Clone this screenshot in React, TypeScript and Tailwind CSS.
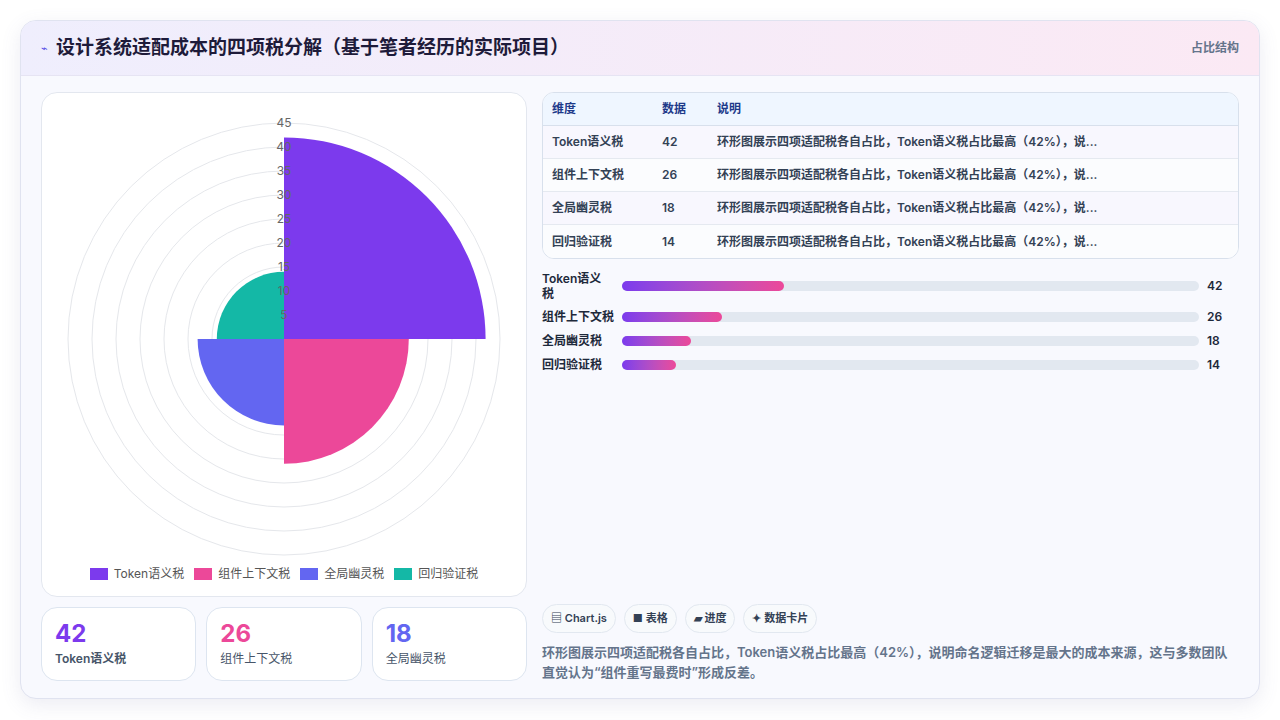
const DATA = [
  { label: "Token语义税", value: 42, color: "#7c3aed" },
  { label: "组件上下文税", value: 26, color: "#ec4899" },
  { label: "全局幽灵税", value: 18, color: "#6366f1" },
  { label: "回归验证税", value: 14, color: "#14b8a6" },
];

const DESC = "环形图展示四项适配税各自占比，Token语义税占比最高（42%），说...";

function PolarChart() {
  const cx = 242;
  const cy = 236;
  const k = 4.8;
  const arc = (r: number, a0: number, a1: number) => {
    const p = (a: number) => [cx + r * Math.cos((a * Math.PI) / 180), cy + r * Math.sin((a * Math.PI) / 180)];
    const [x0, y0] = p(a0);
    const [x1, y1] = p(a1);
    return `M${cx},${cy} L${x0},${y0} A${r},${r} 0 0 1 ${x1},${y1} Z`;
  };
  return (
    <svg width="484" height="460" viewBox="0 0 484 460">
      {Array.from({ length: 9 }, (_, i) => (
        <circle key={i} cx={cx} cy={cy} r={(i + 1) * 5 * k} fill="none" stroke="#e5e7eb" strokeWidth="1" />
      ))}
      {DATA.map((d, i) => (
        <path key={d.label} d={arc(d.value * k, -90 + i * 90, i * 90)} fill={d.color} />
      ))}
      {Array.from({ length: 9 }, (_, i) => (
        <text key={i} x={cx} y={cy - (i + 1) * 5 * k + 4} textAnchor="middle" fontSize="12" fill="#666" fontFamily="Inter, sans-serif">
          {(i + 1) * 5}
        </text>
      ))}
    </svg>
  );
}

export default function App() {
  return (
    <div className="w-[1280px] h-[720px] bg-white p-5" style={{ fontFamily: "Inter, 'Noto Sans CJK SC', sans-serif" }}>
      <div className="h-[679px] rounded-2xl border border-[#e0e3f0] bg-[#f8f9fe] shadow-[0_6px_20px_rgba(100,100,160,0.12)] overflow-hidden flex flex-col">
        {/* Header */}
        <div className="h-[55px] flex items-center justify-between px-5 border-b border-[#e6e4f3] bg-gradient-to-r from-[#efeefd] to-[#fbe9f4]">
          <div className="flex items-center gap-2">
            <span className="text-[11px] text-[#4f46e5]">⌁</span>
            <h1 className="text-[19px] font-bold text-[#1e1b3a]">设计系统适配成本的四项税分解（基于笔者经历的实际项目）</h1>
          </div>
          <span className="text-xs font-semibold text-[#64748b]">占比结构</span>
        </div>

        <div className="flex-1 flex gap-[15px] px-5 pt-4 pb-4">
          {/* Left */}
          <div className="w-[486px] flex flex-col gap-[10px]">
            <div className="h-[505px] rounded-2xl border border-[#e3e7ef] bg-white flex flex-col items-center pt-[10px]">
              <PolarChart />
              <div className="flex items-center gap-[10px] mt-[3px] text-xs text-[#555]">
                {DATA.map((d) => (
                  <div key={d.label} className="flex items-center gap-[6px]">
                    <span className="w-[18px] h-[12px]" style={{ background: d.color }} />
                    {d.label}
                  </div>
                ))}
              </div>
            </div>
            <div className="grid grid-cols-3 gap-[10px]">
              {DATA.slice(0, 3).map((d, i) => (
                <div key={d.label} className="h-[74px] rounded-2xl border border-[#dde5f0] bg-white px-[13px] pt-[12px]">
                  <div className="text-[24px] font-bold leading-7" style={{ color: ["#7c3aed", "#ec4899", "#6366f1"][i] }}>{d.value}</div>
                  <div className={`text-xs text-[#475569] mt-[3px] ${i === 0 ? "font-semibold" : ""}`}>{d.label}</div>
                </div>
              ))}
            </div>
          </div>

          {/* Right */}
          <div className="flex-1 flex flex-col">
            <div className="rounded-xl border border-[#d8e0ec] bg-white overflow-hidden text-xs">
              <div className="flex h-[33px] items-center bg-[#eff6ff] text-[#1e3a8a] font-semibold border-b border-[#d8e0ec]">
                <span className="w-[119px] pl-[9px]">维度</span>
                <span className="w-[55px]">数据</span>
                <span>说明</span>
              </div>
              {DATA.map((d, i) => (
                <div key={d.label} className={`flex h-[33px] items-center text-[#334155] font-semibold ${i % 2 === 0 ? "bg-[#f8f7fe]" : "bg-[#fbfcfe]"} ${i < 3 ? "border-b border-[#e5e9f0]" : ""}`}>
                  <span className="w-[119px] pl-[9px]">{d.label}</span>
                  <span className="w-[55px]">{d.value}</span>
                  <span>{DESC}</span>
                </div>
              ))}
            </div>

            <div className="flex flex-col gap-[8px] mt-[12px] text-xs font-semibold text-[#1e293b]">
              {DATA.map((d, i) => (
                <div key={d.label} className="flex items-center">
                  <span className={`w-[80px] ${i === 0 ? "leading-[15px]" : ""}`}>{i === 0 ? <>Token语义<br />税</> : d.label}</span>
                  <div className="w-[577px] h-[10px] rounded-full bg-[#e2e8f0]">
                    <div className="h-full rounded-full bg-gradient-to-r from-[#7c3aed] to-[#ec4899]" style={{ width: `${(d.value / 150) * 100}%` }} />
                  </div>
                  <span className="ml-[8px]">{d.value}</span>
                </div>
              ))}
            </div>

            <div className="flex-1" />
            <div className="flex gap-[8px] text-[11px] font-semibold text-[#334155]">
              {["▤ Chart.js", "■ 表格", "▰ 进度", "✦ 数据卡片"].map((c) => (
                <span key={c} className="h-[29px] px-[8px] flex items-center rounded-full border border-[#e2e8f0] bg-[#f8fafc]">{c}</span>
              ))}
            </div>
            <p className="mt-[9px] text-[13px] leading-[20px] font-semibold text-[#64748b]">
              环形图展示四项适配税各自占比，Token语义税占比最高（42%），说明命名逻辑迁移是最大的成本来源，这与多数团队直觉认为“组件重写最费时”形成反差。
            </p>
          </div>
        </div>
      </div>
    </div>
  );
}
